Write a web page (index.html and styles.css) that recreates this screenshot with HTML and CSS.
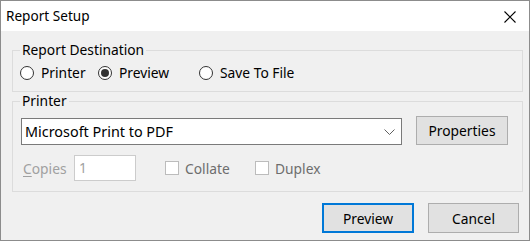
FILE: index.html
```html
<!DOCTYPE html>
<html>
<head>
<meta charset="utf-8">
<link rel="stylesheet" href="styles.css">
</head>
<body>
<div class="window">
  <div class="titlebar">
    <span class="title">Report Setup</span>
    <svg class="close" width="12" height="12" viewBox="0 0 12 12"><path d="M0.5 0.5 L11.5 11.5 M11.5 0.5 L0.5 11.5" stroke="#000" stroke-width="1.1" fill="none"/></svg>
  </div>
  <div class="content">
    <fieldset class="group dest">
      <legend>Report Destination</legend>
      <div class="radios">
        <label class="radio r1"><span class="circle"></span><span class="txt">Printer</span></label>
        <label class="radio r2"><span class="circle checked"></span><span class="txt">Preview</span></label>
        <label class="radio r3"><span class="circle"></span><span class="txt">Save To File</span></label>
      </div>
    </fieldset>
    <fieldset class="group printer">
      <legend>Printer</legend>
      <div class="row1">
        <div class="combo">
          <span class="combo-text">Microsoft Print to PDF</span>
          <svg class="chev" width="11" height="6" viewBox="0 0 11 6"><path d="M0.5 0.5 L5.5 5.5 L10.5 0.5" stroke="#606060" stroke-width="1" fill="none"/></svg>
        </div>
        <button class="btn props">Properties</button>
      </div>
      <div class="row2">
        <span class="copies-label"><u>C</u>opies</span>
        <span class="copies-input">1</span>
        <label class="check c1"><span class="box"></span><span class="ctxt">Collate</span></label>
        <label class="check c2"><span class="box"></span><span class="ctxt">Duplex</span></label>
      </div>
    </fieldset>
    <div class="buttons">
      <button class="btn default">Preview</button>
      <button class="btn cancel">Cancel</button>
    </div>
  </div>
</div>
</body>
</html>
```
FILE: styles.css
```css
* { box-sizing: border-box; }
html, body { margin: 0; padding: 0; background: #f0f0f0; }
body { font-family: "Noto Sans", "Open Sans", sans-serif; font-size: 13.8px; color: #000; }
.window {
  width: 530px; height: 241px;
  border: 1px solid #8c8c8c;
  background: #f0f0f0;
  display: flex; flex-direction: column;
}
.titlebar {
  height: 30px; background: #fff;
  display: flex; align-items: center; justify-content: space-between;
  padding: 0 13px 0 5px;
}
.title { font-size: 13.6px; line-height: 18px; margin-top: 0; }
.close { display: block; margin-top: 1px; }
.content { flex: 1; padding: 0 6px 0 11px; }
.group {
  margin: 0; padding: 0;
  border: 1px solid #dcdcdc;
  min-width: 0;
}
.group legend {
  margin-left: 7px; padding: 0 2px;
  line-height: 14px; font-size: 13.8px;
}
.dest { margin-top: 12px; height: 49px; }
.radios { display: flex; align-items: center; padding: 8px 0 0 7px; height: 24px; }
.radio { display: flex; align-items: center; line-height: 16px; }
.r1 { width: 78px; }
.r2 { width: 101px; }
.circle {
  width: 14px; height: 14px; border-radius: 50%;
  border: 1px solid #333; background: #fff;
  display: flex; align-items: center; justify-content: center;
  margin-right: 7px; flex: none;
}
.circle.checked::after {
  content: ""; width: 8px; height: 8px; border-radius: 50%; background: #333;
}
.printer { margin-top: 2px; height: 98px; }
.row1 { display: flex; align-items: flex-end; padding: 8px 0 0 8px; }
.combo {
  width: 381px; height: 27px;
  border: 1px solid #7a7a7a; background: #fff;
  display: flex; align-items: center; justify-content: space-between;
  padding: 0 6px 0 3px;
}
.combo-text { font-size: 14.4px; }
.chev { display: block; }
.btn {
  font-family: inherit; font-size: 13.8px; color: #000;
  background: #e1e1e1; border: 1px solid #adadad;
  padding: 0; margin: 0;
}
.props { width: 92px; height: 29px; margin-left: 14px; }
.row2 { display: flex; align-items: center; padding: 10px 0 0 10px; }
.copies-label { color: #a0a0a0; width: 51px; }
.copies-label u { text-decoration: underline; text-underline-offset: 2px; }
.copies-input {
  width: 62px; height: 26px; border: 1px solid #cccccc; background: #fff;
  color: #a0a0a0; padding: 0 0 0 4px; line-height: 24px;
}
.check { display: flex; align-items: center; color: #6d6d6d; }
.c1 { margin-left: 29px; width: 90px; }
.box {
  width: 14px; height: 14px; border: 1px solid #bcbcbc; background: #fff;
  margin-right: 6px; flex: none;
}
.buttons {
  display: flex; justify-content: flex-end; gap: 14px;
  padding: 11px 4px 0 0;
}
.buttons .btn { width: 91px; height: 30px; }
.buttons .default { border: 2px solid #0078d7; width: 92px; }
```
